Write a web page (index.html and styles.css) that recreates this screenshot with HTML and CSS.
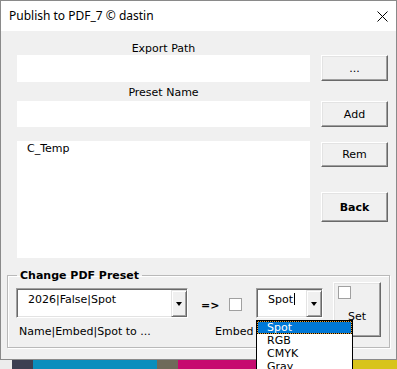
FILE: index.html
```html
<!DOCTYPE html>
<html lang="en">
<head>
  <meta charset="UTF-8">
  <title>Publish to PDF_7</title>
  <meta name="viewport" content="width=device-width, initial-scale=1.0"/>
  <link rel="stylesheet" href="styles.css">
</head>
<body>
  <div class="screen">
    <div class="window">
      <div class="titlebar">
        <span class="title">Publish to PDF_7 © dastin</span>
        <svg class="close" width="11" height="11" viewBox="0 0 11 11">
          <path d="M0.5 0.5 L10.5 10.5 M10.5 0.5 L0.5 10.5" stroke="#000" stroke-width="1" fill="none"/>
        </svg>
      </div>

      <div class="client">
        <div class="top">
          <div class="fields">
            <div class="caption">Export Path</div>
            <div class="textbox tb-path"></div>
            <div class="caption caption-2">Preset Name</div>
            <div class="textbox tb-name"></div>
            <div class="listbox">
              <div class="list-item">C_Temp</div>
            </div>
          </div>
          <div class="actions">
            <button class="btn btn-browse">...</button>
            <button class="btn btn-add">Add</button>
            <button class="btn btn-rem">Rem</button>
            <button class="btn btn-back">Back</button>
          </div>
        </div>

        <fieldset class="group">
          <legend>Change PDF Preset</legend>
          <div class="group-row">
            <div class="col-preset">
              <div class="combo combo-preset">
                <span class="combo-text">2026|False|Spot</span>
                <span class="combo-btn"><i class="arrow"></i></span>
              </div>
              <div class="hint hint-name">Name|Embed|Spot to ...</div>
            </div>
            <div class="col-embed">
              <div class="embed-row">
                <span class="arrow-text">=&gt;</span>
                <span class="check"></span>
              </div>
              <div class="hint hint-embed">Embed</div>
            </div>
            <div class="combo combo-color">
              <span class="combo-text">Spot<i class="caret"></i></span>
              <span class="combo-btn"><i class="arrow"></i></span>
            </div>
            <div class="btn btn-set">
              <span class="check check-set"></span>
              <span class="set-label">Set</span>
            </div>
          </div>
        </fieldset>
      </div>
    </div>

    <div class="desktop">
      <span class="tile tile-gap"></span>
      <span class="tile tile-photo"></span>
      <span class="tile tile-blue"></span>
      <span class="tile tile-photo2"></span>
      <span class="tile tile-magenta"></span>
      <span class="tile tile-yellow"></span>
    </div>

    <ul class="droplist">
      <li class="drop-item selected">Spot</li>
      <li class="drop-item">RGB</li>
      <li class="drop-item">CMYK</li>
      <li class="drop-item">Gray</li>
    </ul>
  </div>
</body>
</html>
```

FILE: styles.css
```css
body {
  margin: 0;
  font-family: 'DejaVu Sans', 'Liberation Sans', sans-serif;
  font-size: 11px;
  color: #000;
  background: #fff;
}
.screen {
  position: relative;
  width: 397px;
  height: 369px;
  overflow: hidden;
}
.window {
  box-sizing: border-box;
  width: 397px;
  height: 360px;
  border: 1px solid #8a8a8a;
  display: flex;
  flex-direction: column;
}
.titlebar {
  height: 30px;
  background: #fff;
  display: flex;
  align-items: center;
  justify-content: space-between;
  padding: 0 8px 0 8px;
}
.title {
  font-family: 'Noto Sans', 'Liberation Sans', sans-serif;
  font-size: 12px;
  line-height: 16px;
  margin-top: -1px;
}
.close {
  display: block;
  margin-top: 0;
}
.client {
  flex: 1;
  background: #f0f0f0;
}
.top {
  display: flex;
  padding: 0 7px 0 16px;
}
.fields {
  width: 293px;
  display: flex;
  flex-direction: column;
}
.caption {
  text-align: center;
  line-height: 13px;
  padding-top: 11px;
}
.caption-2 {
  padding: 4px 0 2px;
}
.textbox {
  background: #fff;
}
.tb-path { height: 27px; }
.tb-name { height: 26px; }
.listbox {
  margin-top: 14px;
  height: 117px;
  background: #fff;
}
.list-item {
  line-height: 13px;
  padding: 1px 0 0 10px;
}
.actions {
  margin-left: 11px;
  width: 67px;
  display: flex;
  flex-direction: column;
}
.btn {
  box-sizing: border-box;
  width: 67px;
  padding: 0;
  font-family: inherit;
  font-size: 11px;
  color: #000;
  background: #f0f0f0;
  border: 1px solid;
  border-color: #fff #696969 #696969 #fff;
  box-shadow: inset -1px -1px #a0a0a0, inset 1px 1px #e3e3e3;
}
.btn-browse { margin-top: 24px; height: 26px; }
.btn-add { margin-top: 20px; height: 26px; }
.btn-rem { margin-top: 15px; height: 25px; }
.btn-back { margin-top: 25px; height: 30px; font-weight: bold; }

.group {
  margin: 11px 6px 0 6px;
  padding: 0 0 10px 0;
  border: 1px solid #b9b9b9;
  box-shadow: inset 1px 1px #fff, 1px 1px #fff;
  min-width: 0;
}
.group legend {
  margin-left: 9px;
  padding: 0 3px;
  font-weight: bold;
  line-height: 13px;
}
.group-row {
  display: flex;
  align-items: flex-start;
  padding-left: 8px;
  height: 55px;
}
.col-preset {
  width: 185px;
  margin-top: 6px;
}
.combo {
  box-sizing: border-box;
  height: 30px;
  display: flex;
  background: #fff;
  border: 1px solid;
  border-color: #a0a0a0 #fff #fff #a0a0a0;
  box-shadow: inset 1px 1px #696969, inset -1px -1px #e3e3e3;
}
.combo-preset { width: 172px; }
.combo-color { width: 67px; margin-top: 6px; }
.combo-text {
  flex: 1;
  padding: 4px 0 0 11px;
  line-height: 13px;
  white-space: nowrap;
}
.combo-btn {
  box-sizing: border-box;
  width: 16px;
  height: 27px;
  margin: 1px 0 0 0;
  display: flex;
  align-items: center;
  justify-content: center;
  background: #f0f0f0;
  border: 1px solid;
  border-color: #e3e3e3 #696969 #696969 #e3e3e3;
  box-shadow: inset 1px 1px #fff, inset -1px -1px #a0a0a0;
}
.arrow {
  width: 0;
  height: 0;
  border-left: 3.5px solid transparent;
  border-right: 3.5px solid transparent;
  border-top: 4px solid #000;
  margin-top: 1px;
}
.caret {
  display: inline-block;
  width: 1px;
  height: 12px;
  background: #000;
  vertical-align: -2px;
  margin-left: 1px;
}
.hint {
  line-height: 13px;
  white-space: nowrap;
}
.hint-name {
  margin-top: 7px;
  padding-left: 3px;
}
.col-embed {
  width: 55px;
  margin-top: 16px;
}
.embed-row {
  display: flex;
  align-items: center;
  height: 13px;
}
.arrow-text {
  font-weight: bold;
  width: 28px;
  line-height: 13px;
  margin-top: 1px;
}
.check {
  box-sizing: border-box;
  display: block;
  width: 13px;
  height: 13px;
  border: 1px solid #a0a0a0;
  background: #fff;
}
.hint-embed {
  margin-top: 14px;
  padding-left: 14px;
}
.btn-set {
  width: 48px;
  height: 55px;
  margin-left: 10px;
  display: flex;
  flex-direction: column;
  align-items: center;
}
.check-set {
  align-self: flex-start;
  margin: 3px 0 0 4px;
}
.set-label {
  margin-top: 11px;
  line-height: 13px;
}

.desktop {
  display: flex;
  height: 9px;
}
.tile { display: block; height: 9px; }
.tile-gap { width: 12px; background: #ececec; }
.tile-photo { width: 21px; background: #3d3f52; }
.tile-blue { width: 124px; background: #0a8ebd; }
.tile-photo2 { width: 21px; background: #6f6a5a; }
.tile-magenta { width: 120px; background: #c60a6f; }
.tile-yellow { flex: 1; background: #d8c41c; }

.droplist {
  position: absolute;
  left: 256px;
  top: 320px;
  box-sizing: border-box;
  width: 97px;
  height: 60px;
  margin: 0;
  padding: 0;
  list-style: none;
  background: #fff;
  border: 1px solid #000;
}
.drop-item {
  height: 13px;
  line-height: 13px;
  padding-left: 10px;
}
.drop-item.selected {
  box-sizing: border-box;
  padding-left: 9px;
  color: #fff;
  background: #e8a030;
  border: 1px dotted #000;
  box-shadow: inset 0 0 0 20px #0078d7;
  line-height: 11px;
}
```
